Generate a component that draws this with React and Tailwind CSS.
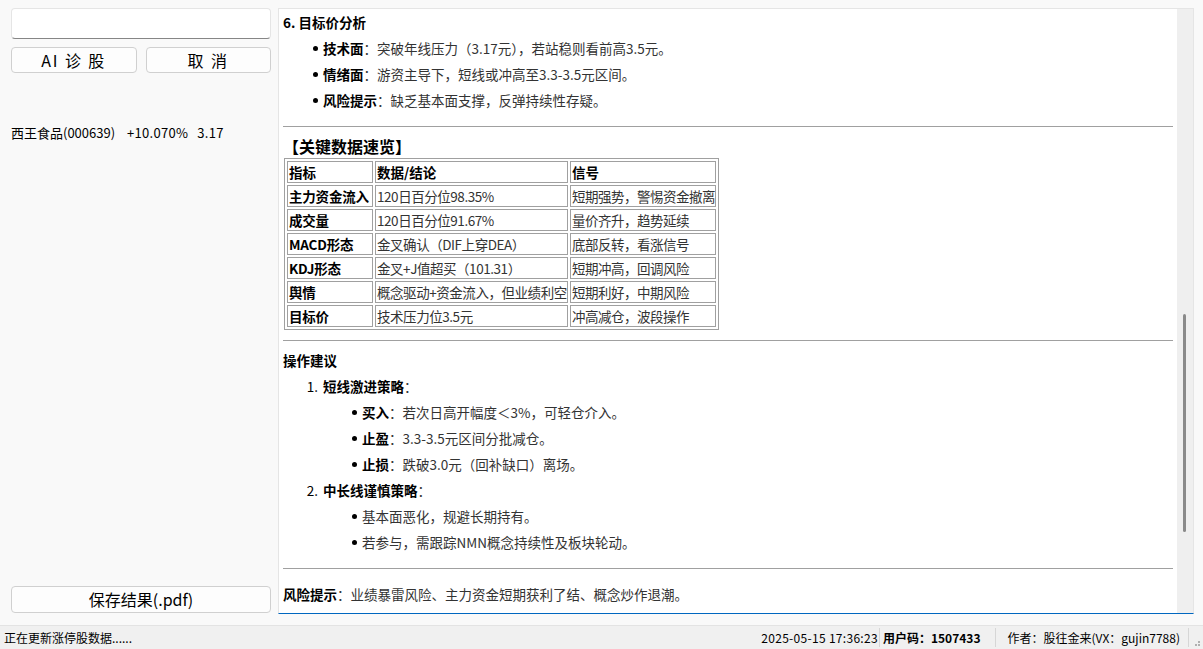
const FONT = { fontFamily: '"Noto Sans CJK SC", "Noto Sans", sans-serif' };

function Dot({ level = 1 }) {
  return (
    <span
      className={`inline-block w-[5px] h-[5px] rounded-full bg-black shrink-0 mr-[5px] ${
        level === 1 ? "ml-[30px]" : "ml-[69px]"
      }`}
    ></span>
  );
}

function Bullet({ label, children, level = 1 }) {
  return (
    <div className="flex items-center h-[26px] whitespace-nowrap">
      <Dot level={level} />
      {label && <span className="font-bold text-black">{label}</span>}
      {label && <span className="text-[#333]">：</span>}
      <span className="text-[#333]">{children}</span>
    </div>
  );
}

function Hr({ className = "" }) {
  return <div className={`border-t border-[#a0a0a0] ${className}`}></div>;
}

const rows = [
  ["主力资金流入", "120日百分位98.35%", "短期强势，警惕资金撤离"],
  ["成交量", "120日百分位91.67%", "量价齐升，趋势延续"],
  ["MACD形态", "金叉确认（DIF上穿DEA）", "底部反转，看涨信号"],
  ["KDJ形态", "金叉+J值超买（101.31）", "短期冲高，回调风险"],
  ["舆情", "概念驱动+资金流入，但业绩利空", "短期利好，中期风险"],
  ["目标价", "技术压力位3.5元", "冲高减仓，波段操作"],
];

function DataTable() {
  return (
    <table className="ml-[1px] table-fixed border-separate border-spacing-[2px] border border-[#a0a0a0] w-[433px] text-[13.5px]">
      <colgroup>
        <col className="w-[86px]" />
        <col className="w-[193px]" />
        <col className="w-[146px]" />
      </colgroup>
      <tbody>
        <tr>
          {["指标", "数据/结论", "信号"].map((h) => (
            <td
              key={h}
              className="border border-[#a0a0a0] h-[22px] p-0 px-[1px] font-bold text-black whitespace-nowrap overflow-hidden leading-[20px]"
            >
              {h}
            </td>
          ))}
        </tr>
        {rows.map((r) => (
          <tr key={r[0]}>
            <td className="border border-[#a0a0a0] h-[22px] p-0 px-[1px] font-bold text-black whitespace-nowrap overflow-hidden leading-[20px] tracking-[-0.2px]">
              {r[0]}
            </td>
            <td className="border border-[#a0a0a0] h-[22px] p-0 px-[1px] text-[#333] whitespace-nowrap overflow-hidden leading-[20px] tracking-[-0.45px]">
              {r[1]}
            </td>
            <td className="border border-[#a0a0a0] h-[22px] p-0 px-[1px] text-[#333] whitespace-nowrap overflow-hidden leading-[20px] tracking-[-0.5px]">
              {r[2]}
            </td>
          </tr>
        ))}
      </tbody>
    </table>
  );
}

function Report() {
  return (
    <div className="flex-1 overflow-hidden pl-[4px] pr-[4px] text-[13.5px] leading-[26px]">
      {/* 目标价分析 */}
      <div className="font-bold text-black h-[26px]">6. 目标价分析</div>
      <Bullet label="技术面">突破年线压力（3.17元），若站稳则看前高3.5元。</Bullet>
      <Bullet label="情绪面">游资主导下，短线或冲高至3.3-3.5元区间。</Bullet>
      <Bullet label="风险提示">缺乏基本面支撑，反弹持续性存疑。</Bullet>
      <Hr className="mt-[13px]" />

      {/* 关键数据速览 */}
      <div className="mt-[7px] text-[16px] leading-[24px] font-bold text-black">【关键数据速览】</div>
      <DataTable />
      <Hr className="mt-[10px]" />

      {/* 操作建议 */}
      <div className="mt-[6px] font-bold text-black h-[26px]">操作建议</div>
      <div className="flex items-center h-[26px]">
        <span className="w-[35px] text-right text-black shrink-0 mr-[5px]">1.</span>
        <span className="font-bold text-black">短线激进策略</span>
        <span className="text-[#333]">：</span>
      </div>
      <Bullet level={2} label="买入">若次日高开幅度＜3%，可轻仓介入。</Bullet>
      <Bullet level={2} label="止盈">3.3-3.5元区间分批减仓。</Bullet>
      <Bullet level={2} label="止损">跌破3.0元（回补缺口）离场。</Bullet>
      <div className="flex items-center h-[26px]">
        <span className="w-[35px] text-right text-black shrink-0 mr-[5px]">2.</span>
        <span className="font-bold text-black">中长线谨慎策略</span>
        <span className="text-[#333]">：</span>
      </div>
      <Bullet level={2}>基本面恶化，规避长期持有。</Bullet>
      <Bullet level={2}>若参与，需跟踪NMN概念持续性及板块轮动。</Bullet>
      <Hr className="mt-[13px]" />

      <div className="mt-[12px] h-[26px] whitespace-nowrap">
        <span className="font-bold text-black">风险提示</span>
        <span className="text-[#333]">：业绩暴雷风险、主力资金短期获利了结、概念炒作退潮。</span>
      </div>
    </div>
  );
}

export default function App() {
  return (
    <div
      className="w-[1203px] h-[649px] bg-[#f9f9f9] flex flex-col overflow-hidden text-black"
      style={FONT}
    >
      <div className="flex flex-1 min-h-0">
        {/* Left panel */}
        <div className="w-[278px] shrink-0 flex flex-col pl-[11px] pr-[7px] pt-[8px] pb-[12px]">
          <div className="h-[31px] bg-white border border-[#e5e5e5] border-b-[#868686] rounded-[4px]"></div>
          <div className="grid grid-cols-2 gap-[9px] mt-[8px]">
            <button className="h-[26px] bg-[#fdfdfd] border border-[#d0d0d0] rounded-[4px] text-[16px] leading-[24px] tracking-[0.12em]">
              AI 诊 股
            </button>
            <button className="h-[26px] bg-[#fdfdfd] border border-[#d0d0d0] rounded-[4px] text-[16px] leading-[24px] tracking-[0.12em]">
              取 消
            </button>
          </div>
          <div className="mt-[50px] text-[13px] leading-[20px] whitespace-nowrap text-black flex">
            <span>西王食品(000639)</span>
            <span className="ml-[12px] tracking-[0.3px]">+10.070%</span>
            <span className="ml-[9px] tracking-[0.3px]">3.17</span>
          </div>
          <div className="flex-1"></div>
          <button className="h-[27px] bg-[#fdfdfd] border border-[#d0d0d0] rounded-[4px] text-[16px] leading-[25px]">
            保存结果(.pdf)
          </button>
        </div>

        {/* Report browser */}
        <div className="mt-[8px] w-[916px] h-[606px] shrink-0 flex bg-white border border-[#e5e5e5] border-b-[#0067c0]">
          <Report />
          <div className="w-[16px] shrink-0 bg-[#efefef] relative">
            <div className="absolute left-[6px] top-[305px] w-[3px] h-[218px] rounded-full bg-[#8a8a8a]"></div>
          </div>
        </div>
      </div>

      {/* Status bar */}
      <div className="h-[24px] shrink-0 bg-[#f0f0f0] border-t border-[#e3e3e3] flex items-center text-[12px] text-black whitespace-nowrap">
        <div className="pl-[4px] flex-1">正在更新涨停股数据......</div>
        <div className="pr-[1px] tracking-[0.3px]">2025-05-15 17:36:23</div>
        <div className="w-px h-[19px] bg-[#d6d6d6] mr-[3px]"></div>
        <div className="font-bold pr-[15px]">用户码：1507433</div>
        <div className="w-px h-[19px] bg-[#d6d6d6]"></div>
        <div className="pl-[11px] pr-[8px]">作者：股往金来(VX：gujin7788)</div>
        <div className="w-px h-[19px] bg-[#d6d6d6]"></div>
        <div className="w-[14px] h-full relative">
          <span className="absolute right-[3px] bottom-[3px] w-[2px] h-[2px] bg-[#b0b0b0]"></span>
          <span className="absolute right-[6px] bottom-[3px] w-[2px] h-[2px] bg-[#b0b0b0]"></span>
          <span className="absolute right-[3px] bottom-[6px] w-[2px] h-[2px] bg-[#b0b0b0]"></span>
        </div>
      </div>
    </div>
  );
}
